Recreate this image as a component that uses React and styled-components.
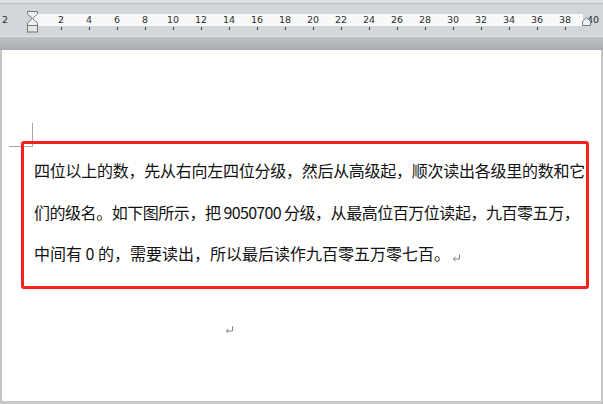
import styled, { createGlobalStyle } from "styled-components";

const GlobalStyle = createGlobalStyle`
  html, body {
    margin: 0;
    padding: 0;
  }
  body {
    width: 603px;
    height: 404px;
    overflow: hidden;
    background: #ffffff;
  }
`;

const Window = styled.div`
  width: 603px;
  height: 404px;
  display: flex;
  flex-direction: column;
  overflow: hidden;
  font-family: "Noto Sans CJK SC", "Noto Sans", sans-serif;
`;

const TopStrip = styled.div`
  height: 3px;
  background: #dcdfe3;
  border-bottom: 1px solid #bcc0c5;
`;

const RulerBand = styled.div`
  position: relative;
  height: 32px;
  padding-top: 10px;
  box-sizing: border-box;
  background: #d2d5da;
`;

const Ruler = styled.div`
  display: flex;
  height: 12px;
  margin-left: -9px;
  background: linear-gradient(
    to right,
    #d2d5da 0 42px,
    #f8f8f8 42px 592px,
    #d2d5da 592px
  );
`;

const TickRow = styled.div`
  display: flex;
  height: 10px;
  margin-left: -9px;
`;

const Cell = styled.div`
  flex: 0 0 28px;
  display: flex;
  justify-content: center;
  font-family: "DejaVu Sans", sans-serif;
  font-size: 9.5px;
  line-height: 12px;
  color: #2e2e2e;
`;

const Tick = styled.span`
  width: 1px;
  height: 3px;
  margin-top: 1px;
  background: ${(p) => (p.$visible ? "#3c3c3c" : "transparent")};
`;

const IndentMarker = styled.svg`
  position: absolute;
  left: 27px;
  top: 7px;
`;

const RightMarker = styled.svg`
  position: absolute;
  left: 582px;
  top: 13px;
`;

const Seam = styled.div`
  height: 1px;
  background: #e4e6e9;
`;

const ShadowBand = styled.div`
  height: 13px;
  background: linear-gradient(to bottom, #bec2c7, #a8acb2);
`;

const Page = styled.div`
  position: relative;
  flex: 1;
  background: #ffffff;
  border-left: 2px solid #c4c4c4;
  border-right: 2px solid #c4c4c4;
  border-bottom: 3px solid #c8c8c8;
  display: flex;
  flex-direction: column;
`;

const CropMark = styled.div`
  position: absolute;
  left: 7px;
  top: 73px;
  width: 23px;
  height: 23px;
  border-right: 1px solid #a6a6a6;
  border-bottom: 1px solid #a6a6a6;
`;

const Highlight = styled.div`
  position: relative;
  z-index: 1;
  box-sizing: border-box;
  width: 568px;
  height: 148px;
  margin: 91px 0 0 19px;
  padding: 6px 1px 0 10px;
  border: 3px solid #f5231b;
  border-radius: 3px;
`;

const Line = styled.div`
  width: ${(p) => p.$width || "551px"};
  white-space: nowrap;
  font-size: 16px;
  line-height: 41.5px;
  color: #111111;
  letter-spacing: ${(p) => p.$spacing || "0px"};
  text-align: ${(p) => (p.$justify ? "justify" : "left")};
  text-align-last: ${(p) => (p.$justify ? "justify" : "auto")};
`;

const MarkWrap = styled.span`
  display: inline-block;
  margin-left: 2px;
  vertical-align: -2px;
`;

const EmptyPara = styled.div`
  margin: 26px 0 0 223px;
  height: 10px;
`;

function ReturnMark() {
  return (
    <svg width="9" height="8" viewBox="0 0 9 8">
      <path
        d="M7.5 0.5 V5 H1.5 M3.5 3 L1.3 5 L3.5 7"
        fill="none"
        stroke="#7f7f7f"
        strokeWidth="1"
      />
    </svg>
  );
}

const labels = [
  "2", "", "2", "4", "6", "8", "10", "12", "14", "16", "18", "20",
  "22", "24", "26", "28", "30", "32", "34", "36", "38", "40",
];

function App() {
  return (
    <Window>
      <GlobalStyle />
      <TopStrip />
      <RulerBand>
        <Ruler>
          {labels.map((l, i) => (
            <Cell key={i}>{l}</Cell>
          ))}
        </Ruler>
        <TickRow>
          {labels.map((l, i) => (
            <Cell key={i}>
              <Tick $visible={i >= 2 && i <= 20} />
            </Cell>
          ))}
        </TickRow>
        <IndentMarker width="11" height="22" viewBox="0 0 11 22">
          <path
            d="M0.5 0.5 H10.5 V3 L5.5 7.5 L0.5 3 Z"
            fill="#f2f2f2"
            stroke="#777"
          />
          <path
            d="M5.5 7.5 L10.5 12 V14.5 H0.5 V12 Z"
            fill="#f2f2f2"
            stroke="#777"
          />
          <rect x="0.5" y="14.5" width="10" height="6.5" fill="#e6e6e6" stroke="#777" />
        </IndentMarker>
        <RightMarker width="9" height="9" viewBox="0 0 9 9">
          <path d="M4.5 0.5 L8.5 4.5 V8.5 H0.5 V4.5 Z" fill="#f2f2f2" stroke="#777" />
        </RightMarker>
      </RulerBand>
      <Seam />
      <ShadowBand />
      <Page>
        <CropMark />
        <Highlight>
          <Line $justify $spacing="-0.3px">
            四位以上的数，先从右向左四位分级，然后从高级起，顺次读出各级里的数和它
          </Line>
          <Line $justify $spacing="-0.7px" $width="545px">
            们的级名。如下图所示，把 9050700 分级，从最高位百万位读起，九百零五万，
          </Line>
          <Line>
            中间有 0 的，需要读出，所以最后读作九百零五万零七百。
            <MarkWrap>
              <ReturnMark />
            </MarkWrap>
          </Line>
        </Highlight>
        <EmptyPara>
          <ReturnMark />
        </EmptyPara>
      </Page>
    </Window>
  );
}

export default App;
